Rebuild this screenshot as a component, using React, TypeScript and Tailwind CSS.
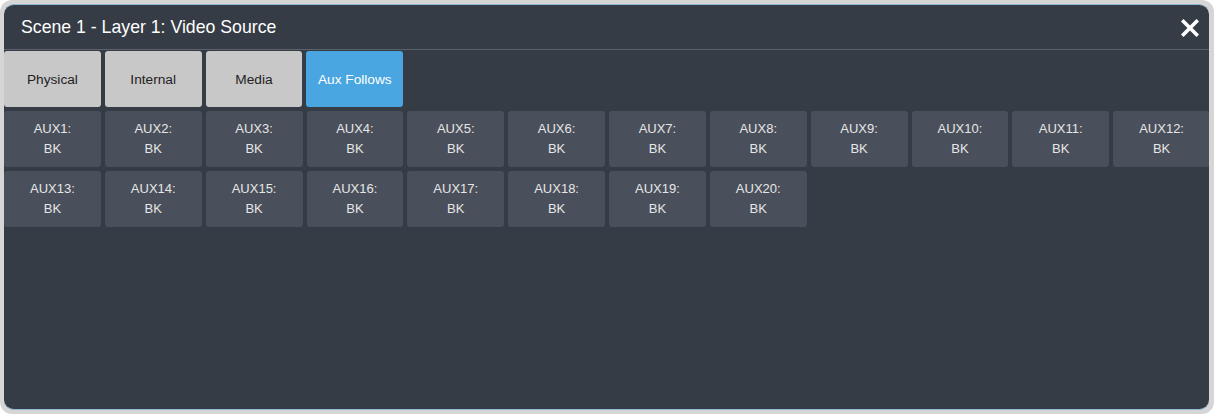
const tabs = ["Physical", "Internal", "Media", "Aux Follows"];
const activeTab = "Aux Follows";

// 20 aux buses, all showing black
const auxSources = Array.from({ length: 20 }, (_, i) => ({
  name: `AUX${i + 1}:`,
  source: "BK",
}));

function CloseIcon() {
  return (
    <svg width="18" height="18" viewBox="0 0 18 18" className="block">
      <path
        d="M2.5 2.5 L15.5 15.5 M15.5 2.5 L2.5 15.5"
        stroke="#ffffff"
        strokeWidth="3.6"
        strokeLinecap="square"
      />
    </svg>
  );
}

export default function App() {
  return (
    <div
      className="w-[1214px] h-[414px] bg-white"
      style={{ fontFamily: '"Liberation Sans", Arial, sans-serif' }}
    >
      <div className="h-full w-full rounded-[12px] bg-[#d6d6d6] pt-[4px] pl-[4px] pr-[5px] pb-[4px]">
        <div className="h-full w-full overflow-hidden rounded-[10px] bg-[#363c45] border-t border-b border-[#8fb8d2] flex flex-col">
          {/* header */}
          <div className="h-[45px] shrink-0 flex items-center justify-between pl-[17px] pr-[10px] pt-[1px] border-b border-[#5b616a]">
            <span className="text-[17.7px] text-white">
              Scene 1 - Layer 1: Video Source
            </span>
            <button className="p-0">
              <CloseIcon />
            </button>
          </div>

          {/* source type tabs */}
          <div className="flex gap-[4px] pt-[1px] w-[1206px]">
            {tabs.map((t) => (
              <div
                key={t}
                className={`w-[96.8px] h-[56px] shrink-0 rounded-[3px] flex items-center justify-center pt-[2px] text-[13.7px] ${
                  t === activeTab
                    ? "bg-[#49a6e0] text-white"
                    : "bg-[#c8c8c8] text-[#222222]"
                }`}
              >
                {t}
              </div>
            ))}
          </div>

          {/* aux buttons */}
          <div className="grid grid-cols-12 gap-[4px] pt-[4px] w-[1206px] shrink-0">
            {auxSources.map((a) => (
              <div
                key={a.name}
                className="h-[56px] rounded-[3px] bg-[#4a505b] flex flex-col items-center justify-center text-[13px] leading-[20px] text-[#e6e6e6]"
              >
                <span>{a.name}</span>
                <span>{a.source}</span>
              </div>
            ))}
          </div>
        </div>
      </div>
    </div>
  );
}
